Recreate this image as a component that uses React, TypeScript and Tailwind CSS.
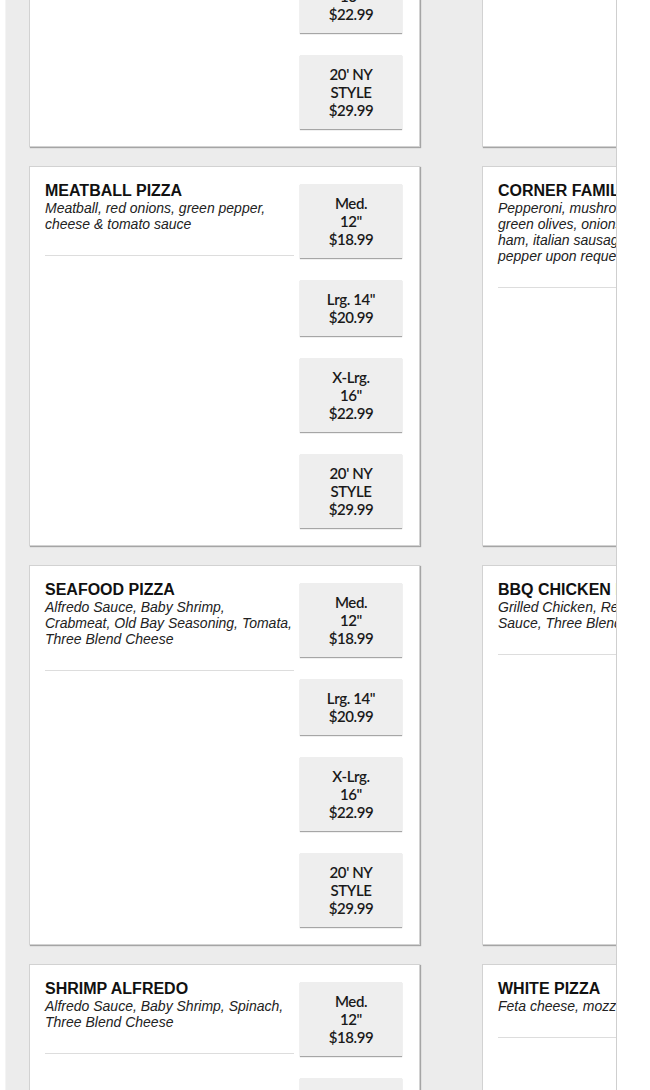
// App.tsx
const sizes = [
  { label: 'Med.\n12"', price: '$18.99' },
  { label: 'Lrg. 14"', price: '$20.99' },
  { label: 'X-Lrg.\n16"', price: '$22.99' },
  { label: "20' NY\nSTYLE", price: '$29.99' },
];

const pizzas = [
  { name: 'VEGGIE PIZZA', desc: 'Mushrooms, onions, green pepper,\nblack olives & tomatoes' },
  { name: 'HAWAIIAN PIZZA', desc: 'Ham, pineapple, cheese\n& tomato sauce' },
  { name: 'MEATBALL PIZZA', desc: 'Meatball, red onions, green pepper,\ncheese & tomato sauce' },
  {
    name: 'CORNER FAMILY SPECIAL',
    desc: 'Pepperoni, mushrooms, sausage,\ngreen olives, onions, green peppers,\nham, italian sausage, bacon & hot\npepper upon request',
  },
  {
    name: 'SEAFOOD PIZZA',
    desc: 'Alfredo Sauce, Baby Shrimp,\nCrabmeat, Old Bay Seasoning, Tomata,\nThree Blend Cheese',
  },
  { name: 'BBQ CHICKEN PIZZA', desc: 'Grilled Chicken, Red Onions, BBQ\nSauce, Three Blend Cheese' },
  { name: 'SHRIMP ALFREDO', desc: 'Alfredo Sauce, Baby Shrimp, Spinach,\nThree Blend Cheese' },
  { name: 'WHITE PIZZA', desc: 'Feta cheese, mozzarella, ricotta' },
];

function PizzaCard({ name, desc }: { name: string; desc: string }) {
  return (
    <div className="flex w-[391px] shrink-0 border border-[#d2d2d2] bg-white pl-[15px] pr-[17px] pt-[15px] pb-[17px] shadow-[1px_1px_1px_rgba(0,0,0,0.3)]">
      <div className="w-[249px] shrink-0 mr-[6px]">
        <h3 className="text-[16px] leading-[18px] font-bold text-[#111] font-['Liberation_Sans',Arial,sans-serif]">
          {name}
        </h3>
        <p className="whitespace-pre-line text-[14px] leading-[16px] italic text-[#222] font-['Liberation_Sans',Arial,sans-serif]">
          {desc}
        </p>
        <div className="mt-[23px] h-px bg-[#dddddd]" />
      </div>
      <div className="mt-[2px] flex w-[102px] shrink-0 flex-col gap-[22px]">
        {sizes.map((s) => (
          <button
            key={s.price}
            className="whitespace-pre-line bg-[#eeeeee] pt-[10px] pb-[10px] text-center text-[15px] leading-[18px] font-semibold tracking-[-0.4px] text-[#1a1a1a] font-['Lato',sans-serif] shadow-[0_1px_1px_rgba(0,0,0,0.35)]"
          >
            {s.label}
            {'\n'}
            {s.price}
          </button>
        ))}
      </div>
    </div>
  );
}

export default function App() {
  return (
    <div className="h-[1090px] overflow-hidden bg-white">
      <div className="ml-[5px] h-[1090px] w-[612px] overflow-hidden border-l border-[#f4f4f4] border-r border-r-[#cfcfcf] bg-[#ececec]">
        <div className="-mt-[233px] grid grid-cols-[391px_391px] gap-x-[62px] gap-y-[19px] pl-[23px]">
          {pizzas.map((p) => (
            <PizzaCard key={p.name} name={p.name} desc={p.desc} />
          ))}
        </div>
      </div>
    </div>
  );
}
